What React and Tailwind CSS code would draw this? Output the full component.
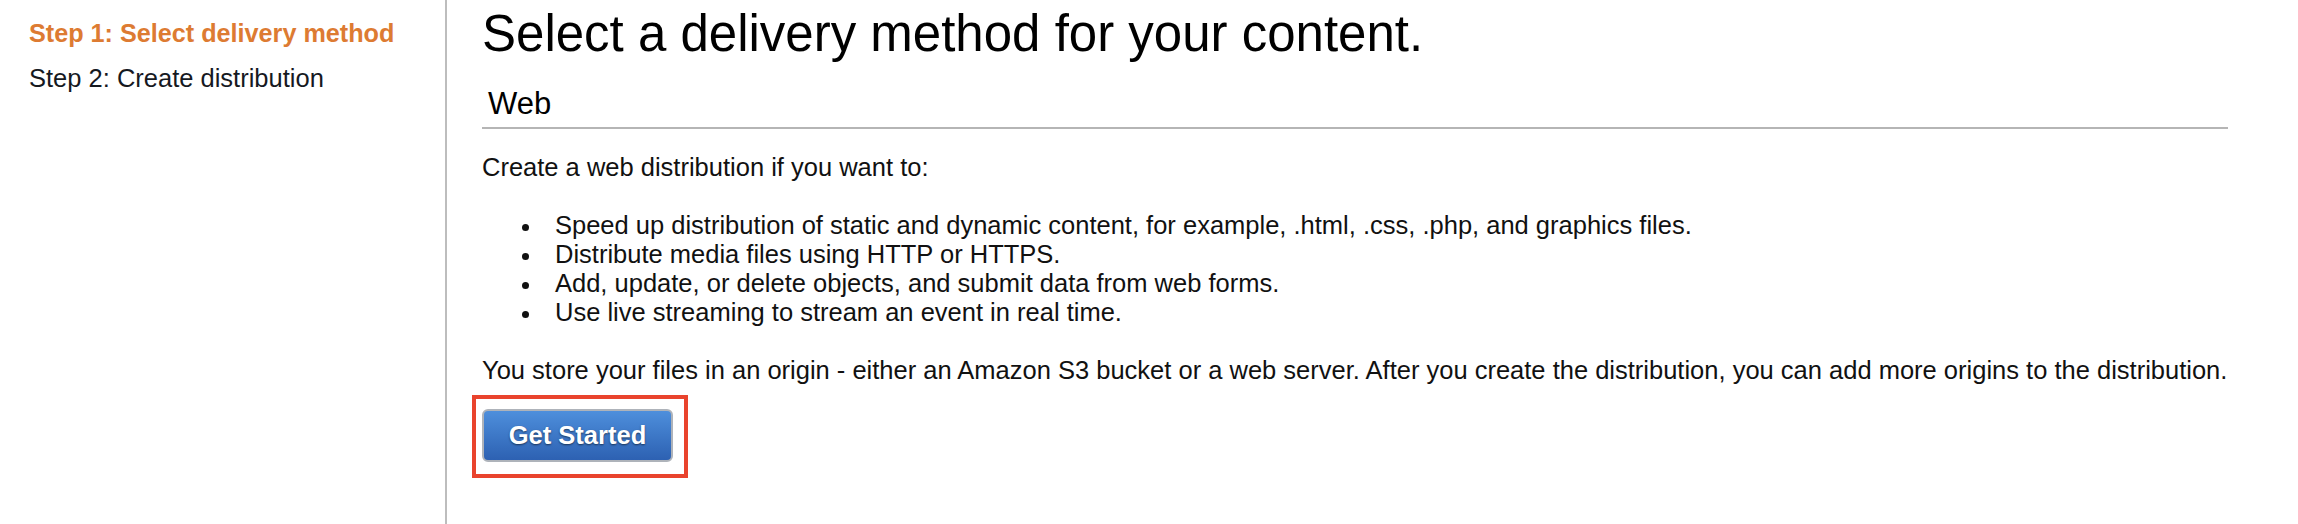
import React from "react";

const items = [
  "Speed up distribution of static and dynamic content, for example, .html, .css, .php, and graphics files.",
  "Distribute media files using HTTP or HTTPS.",
  "Add, update, or delete objects, and submit data from web forms.",
  "Use live streaming to stream an event in real time.",
];

export default function App() {
  return (
    <div className="flex h-[524px] w-full bg-white text-[#111111] [font-family:'Liberation_Sans',Arial,Helvetica,sans-serif]">
      {/* Sidebar */}
      <aside className="w-[445px] shrink-0 pl-[29px] pt-[19px] flex flex-col gap-[16px]">
        <div className="text-[25.2px] leading-[29px] font-bold text-[#dd7b32]">
          Step 1: Select delivery method
        </div>
        <div className="text-[25.5px] leading-[29px] text-[#16191f]">
          Step 2: Create distribution
        </div>
      </aside>

      {/* Divider + main */}
      <main className="flex-1 border-l-2 border-[#bdbdbd] pl-[35px]">
        <div className="w-[1746px]">
          <h1 className="mt-[5px] text-[51px] leading-[57px] font-normal text-black whitespace-nowrap">
            Select a delivery method for your content.
          </h1>

          <div className="mt-[26px] border-b-2 border-[#b5b5b5] pl-[6px] pb-[7px]">
            <h2 className="text-[31px] leading-[32px] font-normal text-black">Web</h2>
          </div>

          <p className="mt-[24px] text-[25.5px] leading-[29px]">
            Create a web distribution if you want to:
          </p>

          <ul className="mt-[29px] pl-[40px] flex flex-col">
            {items.map((t) => (
              <li key={t} className="flex text-[25.5px] leading-[29px] whitespace-nowrap">
                <span className="mt-[13px] mr-[26px] h-[7px] w-[7px] shrink-0 rounded-full bg-[#111111]" />
                <span>{t}</span>
              </li>
            ))}
          </ul>

          <p className="mt-[29px] text-[25.5px] leading-[29px] whitespace-nowrap">
            You store your files in an origin - either an Amazon S3 bucket or a web server. After you create the distribution, you can add more origins to the distribution.
          </p>

          <div className="mt-[24px] relative inline-block">
            <button
              type="button"
              className="flex h-[53px] w-[191px] items-center justify-center rounded-[6px] border-2 border-[#aeb3ba] bg-gradient-to-b from-[#4e8fdc] to-[#2d61b2] text-[25.5px] font-bold text-white [text-shadow:0_1px_2px_rgba(0,0,0,0.55)]"
            >
              Get Started
            </button>
            <span className="pointer-events-none absolute -left-[10px] -top-[14px] -right-[15px] -bottom-[16px] border-4 border-[#e9432d]" />
          </div>
        </div>
      </main>
    </div>
  );
}
